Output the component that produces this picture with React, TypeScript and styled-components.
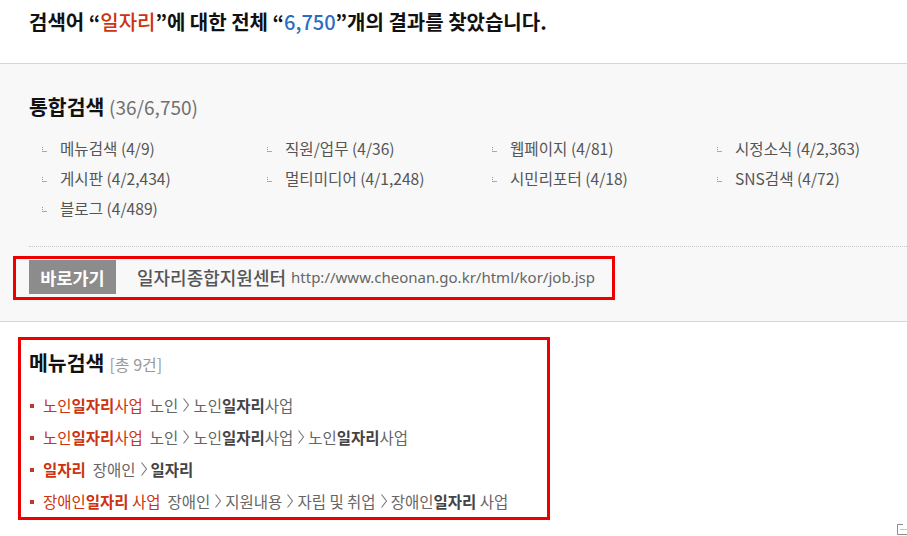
import React from "react";
import styled, { createGlobalStyle } from "styled-components";

const Global = createGlobalStyle`
  html, body { margin: 0; padding: 0; background: #fff; }
  body { font-family: "Noto Sans CJK KR", "Noto Sans", sans-serif; color: #333; }
  * { box-sizing: border-box; }
`;

const Page = styled.div`
  width: 907px;
  height: 536px;
  overflow: hidden;
  position: relative;
`;

const Title = styled.h1`
  margin: 0;
  padding: 10px 0 29px 29px;
  font-size: 20px;
  line-height: 24px;
  font-weight: 700;
  color: #111;
`;

const Red = styled.span`
  color: #cc3311;
  font-weight: 500;
`;
const Blue = styled.span`
  color: #2b6cc4;
  font-weight: 500;
`;

const Summary = styled.section`
  background: #f8f8f8;
  border-top: 1px solid #d6d6d6;
  border-bottom: 1px solid #d6d6d6;
  padding: 27px 0 21px 29px;
`;

const Heading = styled.h2`
  margin: 0;
  font-size: 20.5px;
  line-height: 30px;
  font-weight: 700;
  color: #111;
`;

const Count = styled.span`
  font-size: 19px;
  font-weight: 400;
  color: #707070;
`;

const CatList = styled.ul`
  list-style: none;
  margin: 11px 0 0;
  padding: 0 0 0 13px;
  display: grid;
  grid-template-columns: repeat(4, 225px);
  grid-auto-rows: 30px;
`;

const Cat = styled.li`
  display: flex;
  align-items: center;
  font-size: 15.6px;
  color: #555;
`;

const Tick = styled.span`
  width: 5px;
  height: 5px;
  margin: 2px 13px 0 0;
  border-left: 1px dotted #999;
  border-bottom: 1px solid #aaa;
  flex: none;
`;

const Divider = styled.hr`
  margin: 23px 0 9px;
  border: 0;
  border-top: 1px dotted #c8c8c8;
  height: 0;
`;

const ShortcutBox = styled.div`
  margin-left: -16px;
  width: 602px;
  height: 44px;
  border: 3px solid #ee0000;
  padding: 1px 0 0 13px;
  display: flex;
  align-items: flex-start;
`;

const GoButton = styled.span`
  width: 87px;
  height: 34px;
  background: #8c8c8c;
  color: #fff;
  font-size: 17.5px;
  font-weight: 700;
  display: flex;
  align-items: center;
  justify-content: center;
`;

const SiteName = styled.span`
  margin-left: 21px;
  font-size: 18px;
  line-height: 34px;
  font-weight: 500;
  color: #555;
`;

const SiteUrl = styled.span`
  margin-left: 5px;
  font-size: 15px;
  line-height: 35px;
  color: #666;
  font-family: "Noto Sans", sans-serif;
`;

const MenuBox = styled.div`
  margin: 15px 0 0 18px;
  width: 532px;
  height: 183px;
  border: 3px solid #ee0000;
  padding: 7px 0 0 8px;
`;

const SmallCount = styled.span`
  font-size: 16px;
  font-weight: 400;
  color: #999;
  margin-left: 5px;
`;

const ResultList = styled.ul`
  list-style: none;
  margin: 14px 0 0;
  padding: 0;
  display: flex;
  flex-direction: column;
  gap: 8px;
`;

const Result = styled.li`
  display: flex;
  align-items: center;
  font-size: 15.5px;
  line-height: 24px;
`;

const Square = styled.span`
  width: 4px;
  height: 4px;
  background: #c0392b;
  margin: 1px 9px 0 1px;
  flex: none;
`;

const ResultTitle = styled.span`
  color: #cc3311;
  margin-right: 7px;
`;

const Hl = styled.b`
  font-weight: 700;
`;

const Path = styled.span`
  color: #666;
  display: inline-flex;
  align-items: center;
`;

const PathHl = styled.b`
  font-weight: 700;
  color: #444;
`;

const Corner = styled.span`
  position: absolute;
  right: 0;
  bottom: 1px;
  width: 10px;
  height: 11px;
  display: flex;
`;

const Chev = () => (
  <svg width="8" height="16" viewBox="0 0 8 16" style={{ margin: "0 3px 0 4px" }}>
    <path d="M1.5 1.5 L6.5 8 L1.5 14.5" fill="none" stroke="#777" strokeWidth="1.1" />
  </svg>
);

const highlight = (s: string, Comp: any) => {
  const parts = s.split("일자리");
  const out: React.ReactNode[] = [];
  parts.forEach((p, i) => {
    if (p) out.push(<React.Fragment key={"p" + i}>{p}</React.Fragment>);
    if (i < parts.length - 1) out.push(<Comp key={"h" + i}>일자리</Comp>);
  });
  return out;
};

const cats = [
  "메뉴검색 (4/9)",
  "직원/업무 (4/36)",
  "웹페이지 (4/81)",
  "시정소식 (4/2,363)",
  "게시판 (4/2,434)",
  "멀티미디어 (4/1,248)",
  "시민리포터 (4/18)",
  "SNS검색 (4/72)",
  "블로그 (4/489)",
];

const results: { title: string; path: string[] }[] = [
  { title: "노인일자리사업", path: ["노인", "노인일자리사업"] },
  { title: "노인일자리사업", path: ["노인", "노인일자리사업", "노인일자리사업"] },
  { title: "일자리", path: ["장애인", "일자리"] },
  { title: "장애인일자리 사업", path: ["장애인", "지원내용", "자립 및 취업", "장애인일자리 사업"] },
];

export default function App() {
  return (
    <Page>
      <Global />
      <Title>
        검색어 “<Red>일자리</Red>”에 대한 전체 “<Blue>6,750</Blue>”개의 결과를 찾았습니다.
      </Title>
      <Summary>
        <Heading>
          통합검색 <Count>(36/6,750)</Count>
        </Heading>
        <CatList>
          {cats.map((c) => (
            <Cat key={c}>
              <Tick />
              {c}
            </Cat>
          ))}
        </CatList>
        <Divider />
        <ShortcutBox>
          <GoButton>바로가기</GoButton>
          <SiteName>일자리종합지원센터</SiteName>
          <SiteUrl>http://www.cheonan.go.kr/html/kor/job.jsp</SiteUrl>
        </ShortcutBox>
      </Summary>
      <MenuBox>
        <Heading>
          메뉴검색<SmallCount>[총 9건]</SmallCount>
        </Heading>
        <ResultList>
          {results.map((r, i) => (
            <Result key={i}>
              <Square />
              <ResultTitle>{highlight(r.title, Hl)}</ResultTitle>
              <Path>
                {r.path.map((p, j) => (
                  <React.Fragment key={j}>
                    {j > 0 && <Chev />}
                    <span>{highlight(p, PathHl)}</span>
                  </React.Fragment>
                ))}
              </Path>
            </Result>
          ))}
        </ResultList>
      </MenuBox>
      <Corner>
        <svg width="10" height="11" viewBox="0 0 10 11">
          <path d="M6 0.5 H0.5 V10.5 H10" fill="none" stroke="#8a8a8a" strokeWidth="1" />
          <path d="M3 5.5 H10" stroke="#b8c4dc" strokeWidth="1" />
        </svg>
      </Corner>
    </Page>
  );
}
